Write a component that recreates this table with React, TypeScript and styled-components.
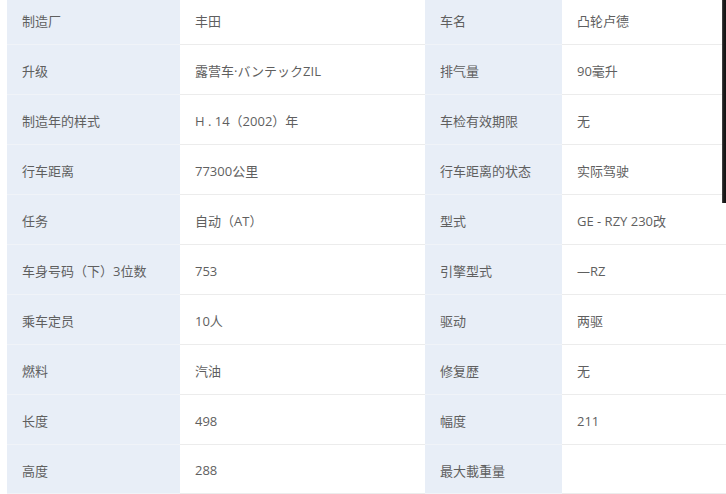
import React from "react";
import styled, { createGlobalStyle } from "styled-components";

const Global = createGlobalStyle`
  html, body { margin: 0; padding: 0; background: #ffffff; overflow: hidden; }
  body { font-family: "Open Sans", "Noto Sans CJK SC", sans-serif; }
`;

const Page = styled.div`
  position: relative;
  width: 726px;
  height: 494px;
  overflow: hidden;
  padding-left: 7px;
  box-sizing: border-box;
`;

const Table = styled.div`
  display: grid;
  grid-template-columns: 173px 245px 137px 1fr;
  margin-top: -5px;
`;

const Cell = styled.div<{ $label?: boolean; $last?: boolean }>`
  height: ${(p) => (p.$last ? "49px" : "50px")};
  border-bottom: 1px solid ${(p) => (p.$label ? "#f0f3f8" : "#ececec")};
  background: ${(p) => (p.$label ? "#e8eef7" : "#ffffff")};
  padding-left: 15px;
  padding-top: 2px;
  display: flex;
  align-items: center;
  box-sizing: border-box;
  font-family: "Open Sans", "Noto Sans CJK SC", sans-serif;
  font-size: 13px;
  color: #5f5f5f;
  white-space: nowrap;
`;

const Scroll = styled.div`
  position: absolute;
  right: 0;
  top: 0;
  width: 4px;
  height: 203px;
  background: linear-gradient(to right, #4a4a4a, #1c1c1c 40%, #111);
`;

const rows: [string, string, string, string][] = [
  ["制造厂", "丰田", "车名", "凸轮卢德"],
  ["升级", "露营车·バンテックZIL", "排气量", "90毫升"],
  ["制造年的样式", "H . 14（2002）年", "车检有效期限", "无"],
  ["行车距离", "77300公里", "行车距离的状态", "实际驾驶"],
  ["任务", "自动（AT）", "型式", "GE - RZY 230改"],
  ["车身号码（下）3位数", "753", "引擎型式", "—RZ"],
  ["乘车定员", "10人", "驱动", "两驱"],
  ["燃料", "汽油", "修复歴", "无"],
  ["长度", "498", "幅度", "211"],
  ["高度", "288", "最大載重量", ""],
];

export default function App() {
  return (
    <Page>
      <Global />
      <Table>
        {rows.map((r, i) => {
          const last = i === rows.length - 1;
          return (
            <React.Fragment key={i}>
              <Cell $label $last={last}>{r[0]}</Cell>
              <Cell $last={last}>{r[1]}</Cell>
              <Cell $label $last={last}>{r[2]}</Cell>
              <Cell $last={last}>{r[3]}</Cell>
            </React.Fragment>
          );
        })}
      </Table>
      <Scroll />
    </Page>
  );
}
